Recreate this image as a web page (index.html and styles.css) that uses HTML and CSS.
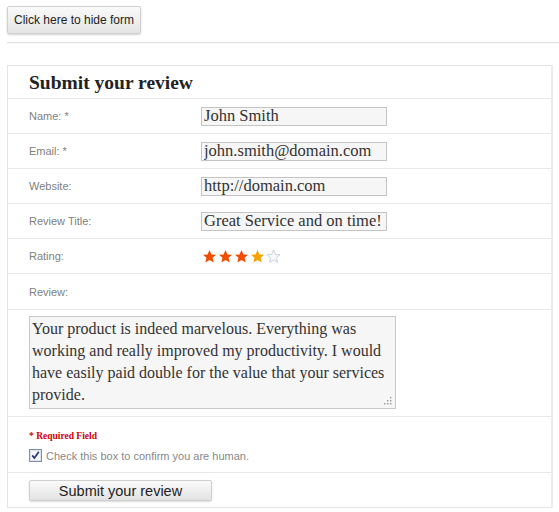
FILE: index.html
```html
<!DOCTYPE html>
<html>
<head>
<meta charset="utf-8">
<link rel="stylesheet" href="styles.css">
</head>
<body>
<div class="top">
  <button class="toggle" type="button">Click here to hide form</button>
</div>
<div class="rule"></div>
<form class="box">
  <h2 class="title">Submit your review</h2>
  <div class="row">
    <label class="lbl">Name: *</label>
    <input class="field" type="text" value="John Smith">
  </div>
  <div class="row">
    <label class="lbl">Email: *</label>
    <input class="field" type="text" value="john.smith@domain.com">
  </div>
  <div class="row">
    <label class="lbl">Website:</label>
    <input class="field" type="text" value="http://domain.com">
  </div>
  <div class="row">
    <label class="lbl">Review Title:</label>
    <input class="field" type="text" value="Great Service and on time!">
  </div>
  <div class="row">
    <label class="lbl">Rating:</label>
    <div class="stars">
      <svg class="star" viewBox="0 0 24 24"><path class="full" d="M12 1.5l3.1 7.1 7.4.6-5.6 4.9 1.7 7.4L12 17.6l-6.6 3.9 1.7-7.4L1.5 9.2l7.4-.6z"/></svg>
      <svg class="star" viewBox="0 0 24 24"><path class="full" d="M12 1.5l3.1 7.1 7.4.6-5.6 4.9 1.7 7.4L12 17.6l-6.6 3.9 1.7-7.4L1.5 9.2l7.4-.6z"/></svg>
      <svg class="star" viewBox="0 0 24 24"><path class="full" d="M12 1.5l3.1 7.1 7.4.6-5.6 4.9 1.7 7.4L12 17.6l-6.6 3.9 1.7-7.4L1.5 9.2l7.4-.6z"/></svg>
      <svg class="star" viewBox="0 0 24 24"><path class="half" d="M12 1.5l3.1 7.1 7.4.6-5.6 4.9 1.7 7.4L12 17.6l-6.6 3.9 1.7-7.4L1.5 9.2l7.4-.6z"/></svg>
      <svg class="star" viewBox="0 0 24 24"><path class="empty" d="M12 1.5l3.1 7.1 7.4.6-5.6 4.9 1.7 7.4L12 17.6l-6.6 3.9 1.7-7.4L1.5 9.2l7.4-.6z"/></svg>
    </div>
  </div>
  <div class="row row-tall">
    <label class="lbl">Review:</label>
  </div>
  <div class="area-row">
    <div class="area-wrap">
      <textarea class="area">Your product is indeed marvelous. Everything was working and really improved my productivity. I would have easily paid double for the value that your services provide.</textarea>
      <svg class="grip" viewBox="0 0 8 8"><rect x="6" y="0" width="1.4" height="1.4"/><rect x="3" y="3" width="1.4" height="1.4"/><rect x="6" y="3" width="1.4" height="1.4"/><rect x="0" y="6" width="1.4" height="1.4"/><rect x="3" y="6" width="1.4" height="1.4"/><rect x="6" y="6" width="1.4" height="1.4"/></svg>
    </div>
  </div>
  <div class="confirm-row">
    <div class="req">* Required Field</div>
    <label class="human">
      <input class="chk" type="checkbox" checked>
      <svg class="box-ico" viewBox="0 0 13 13"><rect x="0.5" y="0.5" width="12" height="12" fill="#eef1f6" stroke="#7d8ea6"/><rect x="1.5" y="1.5" width="10" height="10" fill="#f7f8fb" stroke="#dde3ec"/><path d="M3.2 6.4l2.2 2.6 4.4-6.2" fill="none" stroke="#26387e" stroke-width="1.7"/></svg>
      <span>Check this box to confirm you are human.</span>
    </label>
  </div>
  <div class="submit-row">
    <button class="submit" type="button">Submit your review</button>
  </div>
</form>
</body>
</html>
```
FILE: styles.css
```css
html, body {
  margin: 0;
  padding: 0;
  background: #fff;
}
body {
  font-family: "Liberation Sans", Arial, sans-serif;
  color: #333;
}
.top {
  padding: 6px 0 0 7px;
  height: 30px;
}
.toggle {
  width: 134px;
  height: 28px;
  padding: 0;
  font-family: "Liberation Sans", Arial, sans-serif;
  font-size: 12px;
  color: #222;
  border: 1px solid #d0d0d0;
  border-radius: 2px;
  background: linear-gradient(#fafafa, #e4e4e4);
  box-shadow: 0 1px 2px rgba(0,0,0,0.18);
}
.rule {
  margin: 6px 0 0 7px;
  height: 1px;
  border-top: 1px solid #e3e3e3;
  background: #f6f6f6;
}
.box {
  margin: 21px 6px 0 7px;
  border: 1px solid #e4e4e4;
  border-right: 2px solid #ececec;
  padding: 0;
}
.title {
  margin: 0;
  height: 32px;
  padding: 0 0 0 21px;
  font-family: "Liberation Serif", Georgia, serif;
  font-weight: bold;
  font-size: 19.5px;
  line-height: 33px;
  color: #222;
}
.row {
  display: flex;
  align-items: center;
  height: 34px;
  border-top: 1px solid #e8e8e8;
}
.row-tall {
  height: 35px;
}
.lbl {
  width: 172px;
  padding-left: 21px;
  font-size: 11px;
  color: #808080;
}
.field {
  box-sizing: border-box;
  width: 186px;
  height: 19px;
  margin: 0;
  padding: 0 2px;
  border: 1px solid #c4c4c4;
  background: #f6f6f6;
  font-family: "Liberation Serif", Georgia, serif;
  font-size: 16.5px;
  color: #333;
}
.stars {
  display: flex;
  gap: 1px;
  padding-left: 1px;
}
.star {
  width: 15px;
  height: 15px;
}
.full { fill: #f04d00; }
.half { fill: #f7a200; }
.empty { fill: #f5f7fb; stroke: #c8d0dc; stroke-width: 1.5; }
.area-row {
  border-top: 1px solid #e8e8e8;
  padding: 6px 0 7px 21px;
}
.area-wrap {
  position: relative;
  width: 367px;
  height: 93px;
}
.area {
  display: block;
  box-sizing: border-box;
  width: 367px;
  height: 93px;
  margin: 0;
  padding: 1px 2px;
  border: 1px solid #c8c8c8;
  background: #f6f6f6;
  font-family: "Liberation Serif", Georgia, serif;
  font-size: 16px;
  line-height: 22px;
  color: #333;
  resize: none;
}
.grip {
  position: absolute;
  right: 4px;
  bottom: 4px;
  width: 8px;
  height: 8px;
  fill: #9a9a9a;
}
.confirm-row {
  border-top: 1px solid #e8e8e8;
  padding: 13px 0 9px 21px;
  height: 33px;
}
.req {
  font-family: "Liberation Serif", Georgia, serif;
  font-size: 9.5px;
  font-weight: bold;
  color: #d00000;
  line-height: 12px;
}
.human {
  display: flex;
  align-items: center;
  margin-top: 7px;
  font-size: 11px;
  color: #888;
}
.chk {
  display: none;
}
.box-ico {
  width: 13px;
  height: 13px;
  margin-right: 4px;
}
.submit-row {
  border-top: 1px solid #e8e8e8;
  padding: 7px 0 6px 21px;
  height: 21px;
}
.submit {
  width: 183px;
  height: 21px;
  padding: 0;
  font-family: "Liberation Sans", Arial, sans-serif;
  font-size: 14.5px;
  color: #222;
  border: 1px solid #cfcfcf;
  border-radius: 2px;
  background: linear-gradient(#fbfbfb, #e2e2e2);
  box-shadow: 0 1px 2px rgba(0,0,0,0.15);
}
```
